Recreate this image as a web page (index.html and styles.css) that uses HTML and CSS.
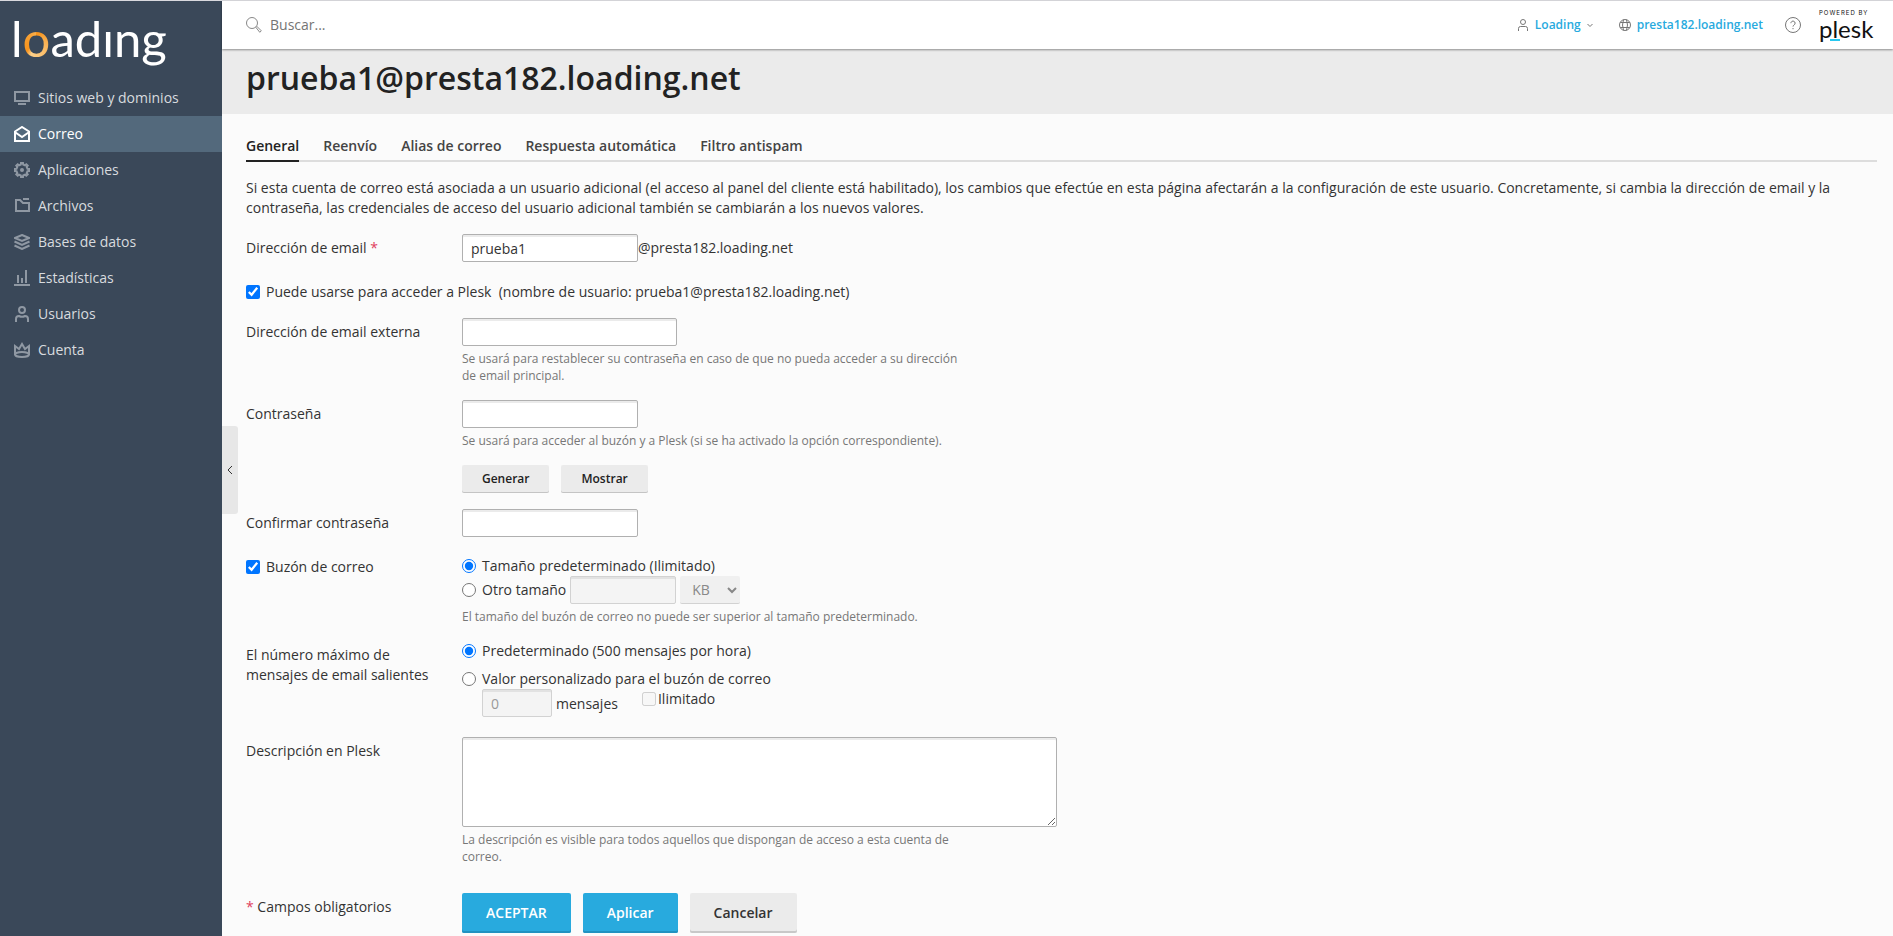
FILE: index.html
```html
<!DOCTYPE html>
<html lang="es">
<head>
    <meta charset="UTF-8">
    <meta name="viewport" content="width=device-width, initial-scale=1">
    <title>prueba1@presta182.loading.net</title>
    <link rel="stylesheet" href="styles.css">
</head>
<body>
    <div class="page">
        <aside class="sidebar">
            <a class="logo" href="#">l<span class="logo-ring">o</span>adıng</a>
            <nav class="nav">
                <a class="nav-item" href="#">
                    <svg class="icon" viewBox="0 0 16 16"><path d="M1 2h14v9H1zM4 14h8"/></svg>
                    Sitios web y dominios
                </a>
                <a class="nav-item active" href="#">
                    <svg class="icon" viewBox="0 0 16 16"><path d="M1 5.500L8 1l7 4.500V15H1zM1.500 6.500L8 11l6.500-4.500"/></svg>
                    Correo
                </a>
                <a class="nav-item" href="#">
                    <svg class="icon" viewBox="0 0 16 16"><path d="M6.800 2.500L7 1h2l.2 1.500 1.800.8 1.300-1 1.400 1.400-1 1.300.8 1.800L15 7v2l-1.500.2-.8 1.800 1 1.300-1.400 1.400-1.300-1-1.800.8L9 15H7l-.2-1.500-1.800-.8-1.300 1-1.400-1.400 1-1.300-.8-1.800L1 9V7l1.500-.2.8-1.800-1-1.300 1.400-1.400 1.300 1z"/><circle class="fill" cx="8" cy="8" r="2"/></svg>
                    Aplicaciones
                </a>
                <a class="nav-item" href="#">
                    <svg class="icon" viewBox="0 0 16 16"><path d="M2 2h4l3 3h6v8H2zM9 1h6"/></svg>
                    Archivos
                </a>
                <a class="nav-item" href="#">
                    <svg class="icon" viewBox="0 0 16 16"><path d="M8 1l7 3-7 3-7-3zM.5 7.500L8 11l7.500-3.500M.5 11.500L8 15l7.500-3.500"/></svg>
                    Bases de datos
                </a>
                <a class="nav-item" href="#">
                    <svg class="icon" viewBox="0 0 16 16"><path d="M0 15h16M4 13V5M8 13V8M12 13V0"/></svg>
                    Estadísticas
                </a>
                <a class="nav-item" href="#">
                    <svg class="icon" viewBox="0 0 16 16"><circle cx="8" cy="4" r="3"/><path d="M2 16v-3q0-3 3-3 3 1.500 6 0 3 0 3 3v3"/></svg>
                    Usuarios
                </a>
                <a class="nav-item" href="#">
                    <svg class="icon" viewBox="0 0 16 16"><path d="M1 13V4l4 3 3-5 3 5 4-3v9"/><ellipse cx="8" cy="12.500" rx="7" ry="2.500"/></svg>
                    Cuenta
                </a>
            </nav>
        </aside>

        <div class="main">
            <header class="topbar">
                <label class="search">
                    <svg class="search-icon" viewBox="0 0 16 16"><circle cx="6" cy="6" r="5.500"/><path d="M10 10.500l1-1 4.300 4.300-1.500 1.500z"/></svg>
                    <input type="text" placeholder="Buscar..." aria-label="Buscar">
                </label>
                <div class="account">
                    <a class="top-link user-link" href="#">
                        <svg class="top-icon" viewBox="0 0 12 12"><circle cx="6" cy="3" r="2.500"/><path d="M1.500 12V9.500q0-2 2-2h5q2 0 2 2V12"/></svg>
                        Loading
                        <svg class="caret" viewBox="0 0 6 6"><path d="M.5 2L3 4.500 5.500 2"/></svg>
                    </a>
                    <a class="top-link" href="#">
                        <svg class="top-icon" viewBox="0 0 12 12"><circle cx="6" cy="6" r="5.500"/><path d="M4.500.7q-2 5.300 0 10.600M7.500.7q2 5.300 0 10.600M1.200 3.500h9.600M1.200 8.500h9.600"/></svg>
                        presta182.loading.net
                    </a>
                    <a class="help" href="#" aria-label="Ayuda">
                        <svg viewBox="0 0 16 16"><circle cx="8" cy="8" r="7.500"/><path d="M5.900 6.200a2.100 2.100 0 1 1 3.300 1.700Q8 8.600 8 9.600M8 11v1.200"/></svg>
                    </a>
                    <a class="plesk" href="#">
                        <span class="plesk-small">POWERED BY</span>
                        <span class="plesk-name">plesk</span>
                    </a>
                </div>
            </header>

            <div class="page-title">
                <h1>prueba1@presta182.loading.net</h1>
            </div>

            <main class="content">
                <nav class="tabs">
                    <a class="tab active" href="#">General</a>
                    <a class="tab" href="#">Reenvío</a>
                    <a class="tab" href="#">Alias de correo</a>
                    <a class="tab" href="#">Respuesta automática</a>
                    <a class="tab" href="#">Filtro antispam</a>
                </nav>

                <p class="intro">Si esta cuenta de correo está asociada a un usuario adicional (el acceso al panel del cliente está habilitado), los cambios que efectúe en esta página afectarán a la configuración de este usuario. Concretamente, si cambia la dirección de email y la contraseña, las credenciales de acceso del usuario adicional también se cambiarán a los nuevos valores.</p>

                <form class="form">
                    <div class="row">
                        <label class="label" for="email">Dirección de email <span class="required">*</span></label>
                        <div class="line">
                            <input class="field medium" type="text" id="email" value="prueba1"><span>@presta182.loading.net</span>
                        </div>
                    </div>

                    <label class="check login-check">
                        <input type="checkbox" checked>
                        <span>Puede usarse para acceder a Plesk &nbsp;(nombre de usuario: prueba1@presta182.loading.net)</span>
                    </label>

                    <div class="row">
                        <label class="label" for="external">Dirección de email externa</label>
                        <div>
                            <input class="field large" type="text" id="external">
                            <p class="hint">Se usará para restablecer su contraseña en caso de que no pueda acceder a su dirección de email principal.</p>
                        </div>
                    </div>

                    <div class="row">
                        <label class="label" for="password">Contraseña</label>
                        <div>
                            <input class="field medium" type="password" id="password">
                            <p class="hint">Se usará para acceder al buzón y a Plesk (si se ha activado la opción correspondiente).</p>
                            <div class="small-buttons">
                                <button class="btn small" type="button">Generar</button>
                                <button class="btn small" type="button">Mostrar</button>
                            </div>
                        </div>
                    </div>

                    <div class="row">
                        <label class="label" for="confirm">Confirmar contraseña</label>
                        <div>
                            <input class="field medium" type="password" id="confirm">
                        </div>
                    </div>

                    <div class="row mailbox">
                        <label class="check">
                            <input type="checkbox" checked>
                            <span>Buzón de correo</span>
                        </label>
                        <div>
                            <label class="check">
                                <input type="radio" name="size" checked>
                                <span>Tamaño predeterminado (Ilimitado)</span>
                            </label>
                            <div class="line size-line">
                                <label class="check">
                                    <input type="radio" name="size">
                                    <span>Otro tamaño</span>
                                </label>
                                <input class="field size" type="text" aria-label="Tamaño" disabled>
                                <select class="unit" aria-label="Unidad" disabled>
                                    <option>KB</option>
                                    <option>MB</option>
                                    <option>GB</option>
                                </select>
                            </div>
                            <p class="hint">El tamaño del buzón de correo no puede ser superior al tamaño predeterminado.</p>
                        </div>
                    </div>

                    <div class="row">
                        <div class="label">El número máximo de mensajes de email salientes</div>
                        <div>
                            <label class="check">
                                <input type="radio" name="limit" checked>
                                <span>Predeterminado (500 mensajes por hora)</span>
                            </label>
                            <label class="check custom-limit">
                                <input type="radio" name="limit">
                                <span>Valor personalizado para el buzón de correo</span>
                            </label>
                            <div class="limit-line">
                                <input class="field count" type="text" id="count" value="0" disabled>
                                <label class="count-label" for="count">mensajes</label>
                                <label class="check unlimited">
                                    <input type="checkbox" disabled>
                                    <span>Ilimitado</span>
                                </label>
                            </div>
                        </div>
                    </div>

                    <div class="row description">
                        <label class="label" for="description">Descripción en Plesk</label>
                        <div>
                            <textarea class="field area" id="description"></textarea>
                            <p class="hint">La descripción es visible para todos aquellos que dispongan de acceso a esta cuenta de correo.</p>
                        </div>
                    </div>

                    <div class="row actions">
                        <div class="label"><span class="required">*</span> Campos obligatorios</div>
                        <div class="action-buttons">
                            <button class="btn primary" type="submit">ACEPTAR</button>
                            <button class="btn primary" type="button">Aplicar</button>
                            <button class="btn" type="button">Cancelar</button>
                        </div>
                    </div>
                </form>
            </main>
        </div>

        <button class="collapse" type="button" aria-label="Ocultar menú">
            <svg viewBox="0 0 6 10"><path d="M5 1L1 5l4 4"/></svg>
        </button>
    </div>
</body>
</html>
```
FILE: styles.css
```css
* {
    box-sizing: border-box;
}

body {
    margin: 0;
    font-family: "Open Sans", "Noto Sans", sans-serif;
    font-size: 14px;
    line-height: 20px;
    color: #333;
    background: #fbfbfb;
}

a {
    text-decoration: none;
}

p, h1 {
    margin: 0;
}

svg {
    display: block;
    fill: none;
    stroke: currentColor;
    flex: none;
}

input, select, textarea, button {
    font: inherit;
    color: inherit;
}

.page {
    display: flex;
    position: relative;
    min-height: 100vh;
    border-top: 1px solid #d9d9de;
}

/* sidebar */
.sidebar {
    flex: none;
    width: 222px;
    background: #3a4859;
}

.logo {
    display: block;
    height: 79px;
    padding-left: 11px;
    font-family: Lato, sans-serif;
    font-size: 49px;
    line-height: 74px;
    color: #fff;
}

.logo-ring {
    color: transparent;
    background: conic-gradient(#f7941d, #f7941d 10%, #fdd08a 55%, #f7941d 60%, #f9b04e);
    background-clip: text;
    -webkit-background-clip: text;
}

.nav-item {
    display: flex;
    align-items: center;
    gap: 8px;
    height: 36px;
    padding: 0 14px;
    color: #d8dbdf;
}

.nav-item.active {
    color: #fff;
    background: #53697c;
}

.icon {
    width: 16px;
    height: 16px;
    color: #8f98a3;
    stroke-width: 2;
}

.active .icon {
    color: #fff;
}

.icon .fill {
    fill: currentColor;
    stroke: none;
}

.collapse {
    position: absolute;
    left: 222px;
    top: calc(50vh - 43px);
    display: flex;
    align-items: center;
    justify-content: center;
    width: 16px;
    height: 88px;
    padding: 0;
    border: 0;
    border-radius: 0 3px 3px 0;
    background: #e7e7e7;
}

.collapse svg {
    width: 6px;
    height: 10px;
}

/* top bar */
.main {
    flex: 1;
    min-width: 0;
}

.topbar {
    display: flex;
    justify-content: space-between;
    position: relative;
    height: 48px;
    padding: 0 16px 0 24px;
    background: #fff;
    box-shadow: 0 1px 2px rgba(0, 0, 0, 0.4);
}

.search {
    display: flex;
    align-items: center;
    gap: 8px;
}

.search-icon {
    width: 16px;
    height: 16px;
    color: #888;
}

.search input {
    width: 240px;
    padding: 0;
    border: 0;
    outline: none;
    background: none;
}

.search input::placeholder {
    color: #757575;
}

.account {
    display: flex;
    align-items: center;
}

.top-link {
    display: flex;
    align-items: center;
    gap: 6px;
    font-size: 12px;
    font-weight: 600;
    color: #28aade;
}

.user-link {
    margin-right: 26px;
}

.top-icon {
    width: 12px;
    height: 12px;
    color: #777;
}

.caret {
    width: 6px;
    height: 6px;
    color: #777;
}

.help {
    margin: 0 18px 0 22px;
    color: #777;
}

.help svg {
    width: 16px;
    height: 16px;
}

.plesk {
    display: flex;
    flex-direction: column;
    width: 58px;
    color: #111;
    font-family: Lato, sans-serif;
}

.plesk-small {
    font-family: Inter, sans-serif;
    font-size: 6px;
    line-height: 8px;
    letter-spacing: 1px;
    white-space: nowrap;
}

.plesk-name {
    position: relative;
    height: 24px;
    font-size: 24px;
    line-height: 23px;
}

.plesk-name::after {
    content: "";
    position: absolute;
    left: 11px;
    bottom: 0;
    width: 10px;
    height: 2px;
    background: #28c8f0;
}

.page-title {
    height: 65px;
    padding: 9px 24px;
    background: #ebebeb;
}

h1 {
    font-size: 32px;
    font-weight: 600;
    line-height: 40px;
    color: #222;
}

/* content */
.content {
    padding: 22px 16px 0 24px;
}

.tabs {
    display: flex;
    gap: 24px;
    border-bottom: 2px solid #ddd;
}

.tab {
    margin-bottom: -2px;
    padding-bottom: 4px;
    border-bottom: 2px solid transparent;
    font-weight: 600;
    color: #444;
}

.tab.active {
    color: #222;
    border-color: #222;
}

.intro {
    margin: 16px 0;
}

.row {
    display: grid;
    grid-template-columns: 200px 1fr;
    gap: 16px;
    margin-bottom: 16px;
}

.label {
    padding-top: 4px;
}

.required {
    color: #e0405e;
}

.line {
    display: flex;
    align-items: center;
}

.field {
    display: block;
    height: 28px;
    padding: 2px 8px;
    border: 1px solid #b0b0b0;
    border-radius: 2px;
    background: #fff;
    box-shadow: inset 0 2px 0 #ebebeb;
}

.field:disabled {
    border-color: #d2d2d2;
    background: #f4f4f4;
    box-shadow: inset 0 2px 0 #e2e2e2;
    color: #999;
}

.medium {
    width: 176px;
}

.large {
    width: 215px;
}

.hint {
    max-width: 500px;
    margin-top: 4px;
    font-size: 12px;
    line-height: 17px;
    color: #777;
}

.check {
    display: flex;
    align-items: center;
    gap: 6px;
}

.check input {
    flex: none;
    width: 14px;
    height: 14px;
    margin: 0;
    accent-color: #0075ff;
}

.login-check {
    margin: 20px 0 16px;
}

.small-buttons {
    display: flex;
    gap: 12px;
    margin-top: 16px;
}

.mailbox {
    padding-top: 3px;
}

.mailbox > .check {
    align-self: start;
    padding-top: 1px;
}

.size-line {
    gap: 4px;
}

.size {
    width: 106px;
}

.unit {
    width: 60px;
    height: 28px;
    padding: 0 8px;
    border: 0;
    border-bottom: 1px solid #d2d2d2;
    border-radius: 2px;
    background: #f0f0f0;
    color: #888;
    opacity: 1;
}

.custom-limit {
    margin-top: 8px;
}

.limit-line {
    display: flex;
    padding-left: 20px;
}

.count {
    width: 70px;
}

.count-label {
    padding: 5px 24px 0 4px;
}

.unlimited {
    align-self: start;
    gap: 2px;
}

.description {
    margin-top: 20px;
}

.area {
    width: 595px;
    height: 90px;
    max-width: 100%;
}

.actions {
    margin: 28px 0 0;
}

.action-buttons {
    display: flex;
    gap: 12px;
}

.btn {
    height: 40px;
    padding: 0 24px;
    border: 0;
    border-radius: 2px;
    background: #ebebeb;
    box-shadow: inset 0 -2px 0 #c8c8c8;
    font-weight: 600;
    color: #333;
}

.btn.small {
    height: 28px;
    padding: 0 20px;
    box-shadow: inset 0 -1px 0 #c4c4c4;
    font-size: 12px;
    color: #222;
}

.btn.primary {
    background: #28aade;
    box-shadow: inset 0 -2px 0 #2192c0;
    color: #fff;
}
```
